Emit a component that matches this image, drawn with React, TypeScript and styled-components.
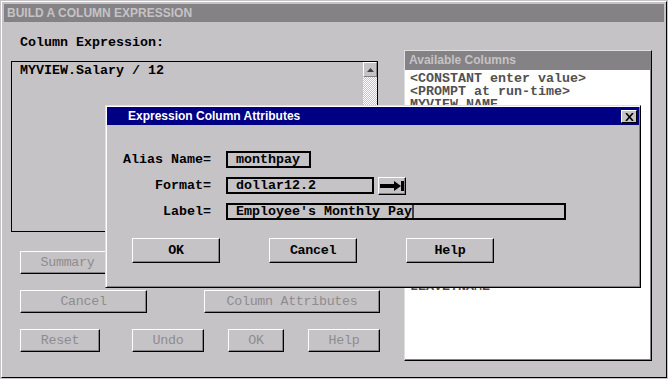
import styled, { createGlobalStyle } from "styled-components";

const GlobalStyle = createGlobalStyle`
  html, body {
    margin: 0;
    padding: 0;
    background: #c6c3c6;
    font-family: "Liberation Mono", "DejaVu Sans Mono", monospace;
    font-size: 13.33px;
    color: #000;
  }
`;

const Window = styled.div`
  position: relative;
  box-sizing: border-box;
  margin: 1px 0 0 1px;
  width: 666px;
  height: 377px;
  padding: 2px;
  border-top: 1px solid #fff;
  border-left: 1px solid #fff;
  border-right: 1px solid #000;
  border-bottom: 1px solid #000;
  overflow: hidden;
`;

const TitleBar = styled.div`
  height: 18px;
  background: #848284;
  color: #c6c3c6;
  font-family: "Liberation Sans", Arial, sans-serif;
  font-weight: bold;
  font-size: 12px;
  line-height: 18px;
  padding-left: 3px;
`;

const Body = styled.div`
  display: flex;
  align-items: flex-start;
  gap: 24px;
  padding: 13px 0 0 7px;
`;

const LeftColumn = styled.div`
  width: 369px;
  display: flex;
  flex-direction: column;
`;

const FieldCaption = styled.div`
  height: 16px;
  line-height: 16px;
  padding-left: 9px;
  margin-bottom: 10px;
  font-weight: bold;
`;

const ExpressionBox = styled.div`
  display: flex;
  width: 367px;
  height: 171px;
`;

const ExpressionText = styled.div`
  flex: 1;
  box-sizing: border-box;
  border: 1px solid #000;
  border-right: none;
  padding: 2px 8px;
  line-height: 14px;
  font-weight: bold;
`;

const ScrollTrack = styled.div`
  width: 15px;
  box-sizing: border-box;
  border-top: 1px solid #000;
  border-right: 1px solid #000;
  background: repeating-conic-gradient(#ffffff 0 25%, #c6c3c6 0 50%) 0 0 / 2px 2px;
`;

const ScrollButton = styled.div`
  box-sizing: border-box;
  height: 15px;
  background: #c6c3c6;
  border-top: 1px solid #fff;
  border-left: 1px solid #fff;
  border-right: 1px solid #848284;
  border-bottom: 1px solid #848284;
  display: flex;
  align-items: center;
  justify-content: center;
`;

const ButtonRow = styled.div<{ $top: number }>`
  display: flex;
  padding-left: 9px;
  margin-top: ${(p) => p.$top}px;
`;

const RaisedButton = styled.div<{ $w: number; $h?: number; $ml?: number; $disabled?: boolean }>`
  box-sizing: border-box;
  width: ${(p) => p.$w}px;
  height: ${(p) => p.$h ?? 23}px;
  margin-left: ${(p) => p.$ml ?? 0}px;
  border-top: 1px solid #fff;
  border-left: 1px solid #fff;
  border-right: 1px solid #000;
  border-bottom: 1px solid #000;
  box-shadow: inset -1px -1px #848284;
  display: flex;
  align-items: center;
  justify-content: center;
  color: ${(p) => (p.$disabled ? "#8e8c8e" : "#000")};
  font-weight: ${(p) => (p.$disabled ? "normal" : "bold")};
  letter-spacing: -0.3px;
`;

const ColumnsPanel = styled.div`
  box-sizing: border-box;
  width: 248px;
  height: 311px;
  margin-top: 15px;
  border-top: 1px solid #dfdfdf;
  border-left: 1px solid #dfdfdf;
  border-right: 1px solid #000;
  border-bottom: 1px solid #000;
  padding: 0 1px 1px 0;
  display: flex;
  flex-direction: column;
  background: #848284;
`;

const PanelHeader = styled.div`
  height: 19px;
  line-height: 19px;
  padding-left: 4px;
  background: #848284;
  color: #c6c3c6;
  font-family: "Liberation Sans", Arial, sans-serif;
  font-weight: bold;
  font-size: 12px;
`;

const ColumnList = styled.div`
  flex: 1;
  background: #fff;
  padding: 2px 0 0 4px;
  color: #525152;
  border-left: 1px solid #fff;
`;

const ColumnItem = styled.div<{ $gapAbove?: number }>`
  height: 13px;
  line-height: 13px;
  white-space: nowrap;
  font-weight: bold;
  margin-top: ${(p) => (p.$gapAbove ?? 0) * 13}px;
`;

const Dialog = styled.div`
  position: absolute;
  left: 103px;
  top: 103px;
  box-sizing: border-box;
  width: 536px;
  height: 183px;
  padding: 1px;
  background: #c6c3c6;
  border-top: 1px solid #dfdfdf;
  border-left: 1px solid #dfdfdf;
  border-right: 1px solid #000;
  border-bottom: 1px solid #000;
  box-shadow: inset 1px 1px #fff, inset -1px -1px #848284;
`;

const DialogTitle = styled.div`
  height: 18px;
  background: #000084;
  color: #fff;
  font-family: "Liberation Sans", Arial, sans-serif;
  font-weight: bold;
  font-size: 12px;
  display: flex;
  align-items: center;
  justify-content: space-between;
  padding: 0 2px 0 21px;
`;

const CloseButton = styled.div`
  box-sizing: border-box;
  width: 16px;
  height: 13px;
  margin-top: 1px;
  background: #c6c3c6;
  border-top: 1px solid #fff;
  border-left: 1px solid #fff;
  border-right: 1px solid #000;
  border-bottom: 1px solid #000;
  display: flex;
  align-items: center;
  justify-content: center;
`;

const Form = styled.div`
  display: flex;
  flex-direction: column;
  gap: 9px;
  padding-top: 26px;
`;

const FormRow = styled.div`
  display: flex;
  align-items: center;
  height: 17px;
`;

const FormLabel = styled.div`
  width: 104px;
  text-align: right;
  margin-right: 15px;
  font-weight: bold;
`;

const InputBox = styled.div<{ $w: number }>`
  box-sizing: border-box;
  width: ${(p) => p.$w}px;
  height: 17px;
  border: 2px solid #000;
  padding-left: 8px;
  line-height: 13px;
  white-space: nowrap;
  font-weight: bold;
  display: flex;
  align-items: center;
`;

const Caret = styled.span`
  display: inline-block;
  width: 2px;
  height: 13px;
  background: #424142;
`;

const DialogButtons = styled.div`
  display: flex;
  gap: 49px;
  padding: 18px 0 0 25px;
`;

const ArrowIcon = () => (
  <svg width="24" height="10" viewBox="0 0 24 10">
    <rect x="0" y="3" width="15" height="4" fill="#000" />
    <polygon points="14,0 21,5 14,10" fill="#000" />
    <rect x="21" y="0" width="3" height="10" fill="#000" />
  </svg>
);

// rows 4..16 of the list sit under the dialog
const columns: { name: string; gapAbove?: number }[] = [
  { name: "<CONSTANT enter value>" },
  { name: "<PROMPT at run-time>" },
  { name: "MYVIEW.NAME" },
  { name: "LEAVE.NAME", gapAbove: 13 },
];

const App = () => {
  return (
    <>
      <GlobalStyle />
      <Window>
        <TitleBar>BUILD A COLUMN EXPRESSION</TitleBar>
        <Body>
          <LeftColumn>
            <FieldCaption>Column Expression:</FieldCaption>
            <ExpressionBox>
              <ExpressionText>MYVIEW.Salary / 12</ExpressionText>
              <ScrollTrack>
                <ScrollButton>
                  <svg width="7" height="4" viewBox="0 0 7 4">
                    <polygon points="3.5,0 7,4 0,4" fill="#424142" />
                  </svg>
                </ScrollButton>
              </ScrollTrack>
            </ExpressionBox>
            <ButtonRow $top={19}>
              <RaisedButton $w={95} $disabled>Summary</RaisedButton>
            </ButtonRow>
            <ButtonRow $top={16}>
              <RaisedButton $w={127} $disabled>Cancel</RaisedButton>
              <RaisedButton $w={176} $ml={57} $disabled>Column Attributes</RaisedButton>
            </ButtonRow>
            <ButtonRow $top={16}>
              <RaisedButton $w={80} $disabled>Reset</RaisedButton>
              <RaisedButton $w={72} $ml={32} $disabled>Undo</RaisedButton>
              <RaisedButton $w={56} $ml={24} $disabled>OK</RaisedButton>
              <RaisedButton $w={72} $ml={24} $disabled>Help</RaisedButton>
            </ButtonRow>
          </LeftColumn>
          <ColumnsPanel>
            <PanelHeader>Available Columns</PanelHeader>
            <ColumnList>
              {columns.map((c) => (
                <ColumnItem key={c.name} $gapAbove={c.gapAbove}>
                  {c.name}
                </ColumnItem>
              ))}
            </ColumnList>
          </ColumnsPanel>
        </Body>

        <Dialog>
          <DialogTitle>
            <span>Expression Column Attributes</span>
            <CloseButton>
              <svg width="9" height="8" viewBox="0 0 9 8">
                <path d="M1 0 L8 8 M8 0 L1 8" stroke="#000" strokeWidth="1.6" />
              </svg>
            </CloseButton>
          </DialogTitle>
          <Form>
            <FormRow>
              <FormLabel>Alias Name=</FormLabel>
              <InputBox $w={85}>monthpay</InputBox>
            </FormRow>
            <FormRow>
              <FormLabel>Format=</FormLabel>
              <InputBox $w={148}>dollar12.2</InputBox>
              <RaisedButton $w={28} $h={18} $ml={4}>
                <ArrowIcon />
              </RaisedButton>
            </FormRow>
            <FormRow>
              <FormLabel>Label=</FormLabel>
              <InputBox $w={340}>
                Employee's Monthly Pay
                <Caret />
              </InputBox>
            </FormRow>
          </Form>
          <DialogButtons>
            <RaisedButton $w={88} $h={25}>OK</RaisedButton>
            <RaisedButton $w={88} $h={25}>Cancel</RaisedButton>
            <RaisedButton $w={88} $h={25}>Help</RaisedButton>
          </DialogButtons>
        </Dialog>
      </Window>
    </>
  );
};

export default App;
